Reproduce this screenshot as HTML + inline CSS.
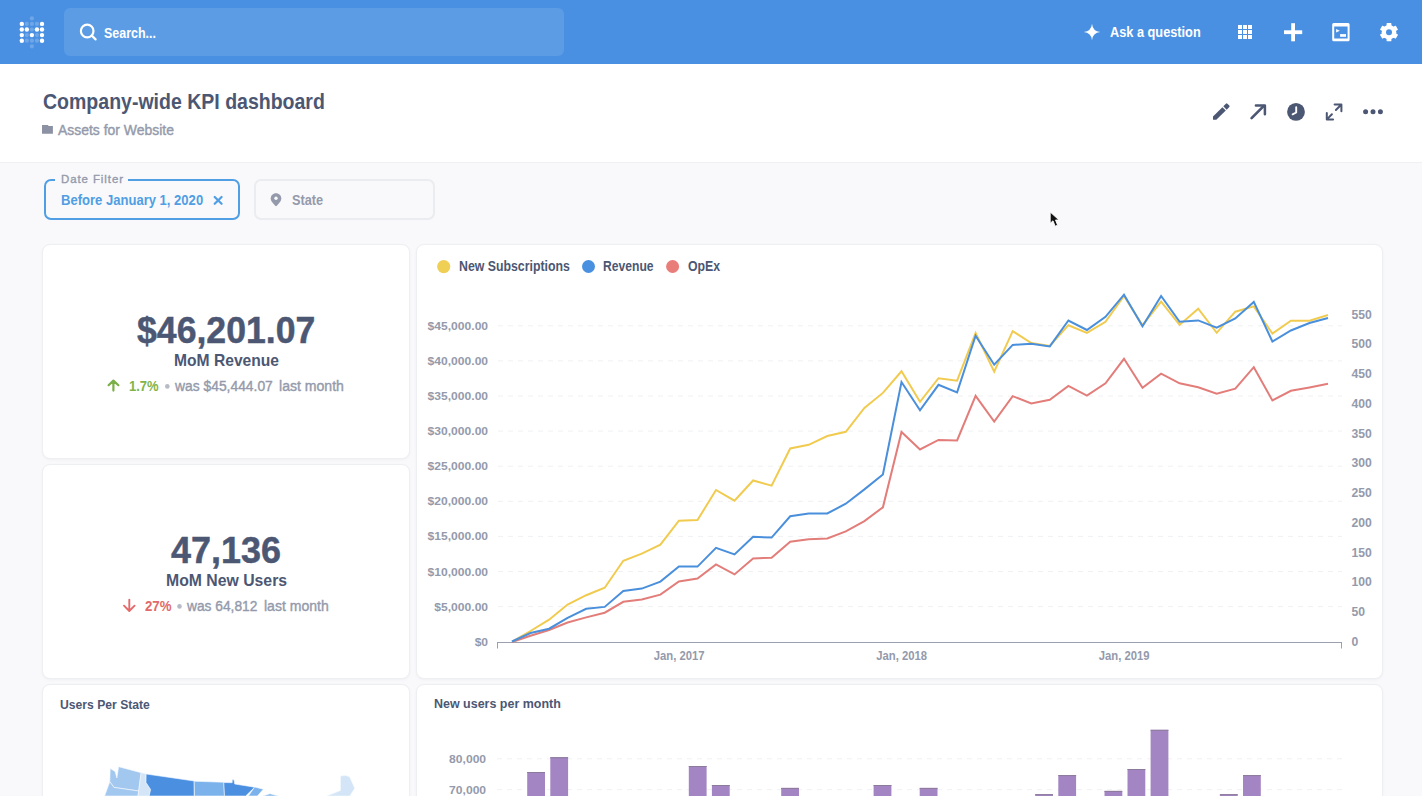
<!DOCTYPE html>
<html><head><meta charset="utf-8">
<style>
html,body{margin:0;padding:0;}
body{width:1422px;height:796px;overflow:hidden;position:relative;background:#F9F9FB;font-family:"Liberation Sans",sans-serif;}
.abs{position:absolute;}
.t{position:absolute;white-space:pre;line-height:1;transform-origin:0 0;font-family:"Liberation Sans",sans-serif;}
#nav{position:absolute;left:0;top:0;width:1422px;height:64px;background:#4A90E2;}
#search{position:absolute;left:64px;top:8px;width:500px;height:48px;border-radius:6px;background:#5B9CE5;}
#header{position:absolute;left:0;top:64px;width:1422px;height:98px;background:#FFFFFF;border-bottom:1px solid #EEF0F3;}
.card{position:absolute;background:#FFFFFF;border:1px solid #EDEFF2;border-radius:8px;box-shadow:0 1px 3px rgba(0,0,0,0.04);box-sizing:border-box;overflow:hidden;}
#df{position:absolute;left:44px;top:179px;width:196px;height:40.5px;box-sizing:border-box;border:2px solid #509EE3;border-radius:7px;}
#dflab{position:absolute;left:55px;top:176px;width:73px;height:6px;background:#F9F9FB;}
#st{position:absolute;left:254px;top:179px;width:181px;height:40.5px;box-sizing:border-box;border:2px solid #EBECEF;border-radius:7px;}
svg{position:absolute;left:0;top:0;overflow:visible;}
.grid{stroke:#F0F1F3;stroke-width:1;stroke-dasharray:5 5;}
.lab{font-family:"Liberation Sans",sans-serif;font-weight:700;fill:#949AAB;}
.bar{fill:#A385C3;}
.bartop{stroke:#8C7A9A;stroke-width:1;}
</style></head>
<body>
<div id="nav"><div id="search"></div></div>
<div id="header"></div>
<div id="df"></div><div id="dflab"></div>
<div id="st"></div>
<div class="card" style="left:41.5px;top:243.5px;width:368.7px;height:215px"></div>
<div class="card" style="left:41.5px;top:463.5px;width:368.7px;height:215px"></div>
<div class="card" style="left:416px;top:243.5px;width:967.2px;height:435px"></div>
<div class="card" style="left:41.5px;top:683.8px;width:368.7px;height:130px"></div>
<div class="card" style="left:416px;top:683.8px;width:967.2px;height:130px"></div>

<svg width="1422" height="796" viewBox="0 0 1422 796">
<!-- logo -->
<g fill="#FFFFFF">
 <g opacity="0.2">
  <circle cx="31.9" cy="18.3" r="2.1"/>
  <circle cx="26.85" cy="23.9" r="2.1"/><circle cx="31.9" cy="23.9" r="2.1"/><circle cx="36.95" cy="23.9" r="2.1"/>
  <circle cx="31.9" cy="29.5" r="2.1"/>
  <circle cx="26.85" cy="35.1" r="2.1"/><circle cx="36.95" cy="35.1" r="2.1"/>
  <circle cx="26.85" cy="40.7" r="2.1"/><circle cx="31.9" cy="40.7" r="2.1"/><circle cx="36.95" cy="40.7" r="2.1"/>
  <circle cx="31.9" cy="46.3" r="2.1"/>
 </g>
 <circle cx="21.8" cy="23.9" r="2.2"/><circle cx="42" cy="23.9" r="2.2"/>
 <circle cx="21.8" cy="29.5" r="2.2"/><circle cx="26.85" cy="29.5" r="2.2"/><circle cx="36.95" cy="29.5" r="2.2"/><circle cx="42" cy="29.5" r="2.2"/>
 <circle cx="21.8" cy="35.1" r="2.2"/><circle cx="31.9" cy="35.1" r="2.2"/><circle cx="42" cy="35.1" r="2.2"/>
 <circle cx="21.8" cy="40.7" r="2.2"/><circle cx="42" cy="40.7" r="2.2"/>
</g>
<!-- search icon -->
<circle cx="87.2" cy="31" r="6.3" fill="none" stroke="#FFFFFF" stroke-width="2.2"/>
<line x1="91.8" y1="35.6" x2="95.6" y2="39.4" stroke="#FFFFFF" stroke-width="2.2" stroke-linecap="round"/>
<!-- sparkle -->
<path d="M1092,23.8 Q1092.7,31.3 1100.2,32 Q1092.7,32.7 1092,40.2 Q1091.3,32.7 1083.8,32 Q1091.3,31.3 1092,23.8Z" fill="#FFFFFF"/>
<!-- grid -->
<g fill="#FFFFFF">
 <rect x="1238" y="25" width="4" height="4"/><rect x="1243" y="25" width="4" height="4"/><rect x="1248" y="25" width="4" height="4"/>
 <rect x="1238" y="30" width="4" height="4"/><rect x="1243" y="30" width="4" height="4"/><rect x="1248" y="30" width="4" height="4"/>
 <rect x="1238" y="35" width="4" height="4"/><rect x="1243" y="35" width="4" height="4"/><rect x="1248" y="35" width="4" height="4"/>
</g>
<!-- plus -->
<g fill="#FFFFFF"><rect x="1284" y="30.3" width="18.2" height="3.8"/><rect x="1291.2" y="23.2" width="3.8" height="18.1"/></g>
<!-- terminal -->
<path fill="#FFFFFF" fill-rule="evenodd" d="M1333.7,23.1 L1348.1,23.1 Q1349.6,23.1 1349.6,24.6 L1349.6,39.8 Q1349.6,41.3 1348.1,41.3 L1333.7,41.3 Q1332.2,41.3 1332.2,39.8 L1332.2,24.6 Q1332.2,23.1 1333.7,23.1Z M1334.2,26.4 L1334.2,38.5 L1347.6,38.5 L1347.6,26.4Z"/>
<path d="M1336.1,29 L1339.8,30.7 L1336.1,32.4Z" fill="#FFFFFF"/>
<rect x="1340.1" y="34.1" width="5.9" height="2.7" fill="#FFFFFF"/>
<!-- gear -->
<g transform="translate(1389,32.2)" fill="#FFFFFF">
 <circle r="7.3"/>
 <rect x="-2.4" y="-9.1" width="4.8" height="18.2" rx="0.6"/>
 <rect x="-2.4" y="-9.1" width="4.8" height="18.2" rx="0.6" transform="rotate(60)"/>
 <rect x="-2.4" y="-9.1" width="4.8" height="18.2" rx="0.6" transform="rotate(-60)"/>
</g>
<circle cx="1389" cy="32.2" r="3" fill="#4A90E2"/>

<!-- header icons -->
<g fill="#4C5773">
 <path d="M1213,119.8 L1213,116.6 L1222.4,107.2 L1225.8,110.6 L1216.3,119.8Z"/>
 <path d="M1223.3,106.3 L1225.9,103.7 Q1226.6,103 1227.4,103.7 L1229.3,105.6 Q1230,106.4 1229.3,107.1 L1226.7,109.7Z"/>
 <circle cx="1296" cy="111.9" r="8.9"/>
 <circle cx="1365.6" cy="111.8" r="2.5"/><circle cx="1373" cy="111.8" r="2.5"/><circle cx="1380.4" cy="111.8" r="2.5"/>
</g>
<g stroke="#4C5773" fill="none" stroke-linecap="round" stroke-linejoin="round">
 <path d="M1251.6,118.1 L1263.6,106.1" stroke-width="2.7"/>
 <path d="M1255.9,105.4 L1264.9,105.4 L1264.9,114.2" stroke-width="2.5"/>
 <path d="M1334.6,104.5 L1341.4,104.5 L1341.4,111.2 M1335.9,110 L1339.6,106.3" stroke-width="2"/>
 <path d="M1326.8,113 L1326.8,119.4 L1333.1,119.4 M1328.6,117.6 L1331.9,114.2" stroke-width="2"/>
</g>
<path d="M1296.2,107.2 L1296.2,112.5 L1292.6,114.3" stroke="#FFFFFF" stroke-width="1.9" fill="none" stroke-linecap="round" stroke-linejoin="round"/>
<!-- folder -->
<path d="M42,124.9 L47.8,124.9 L48.7,125.9 L52.9,125.9 L52.9,133.8 L42,133.8Z" fill="#8C92A4"/>
<!-- close x -->
<path d="M214.7,197 L221.6,203.8 M221.6,197 L214.7,203.8" stroke="#509EE3" stroke-width="2.2" stroke-linecap="round"/>
<!-- pin -->
<path d="M276,193.2 C279,193.2 281.3,195.5 281.3,198.4 C281.3,201.2 278,204.5 276,206.3 C274,204.5 270.7,201.2 270.7,198.4 C270.7,195.5 273,193.2 276,193.2Z" fill="#949AAB"/>
<circle cx="276" cy="198.3" r="1.7" fill="#FBFBFD"/>
<!-- metric arrows -->
<path d="M113.4,390.6 L113.4,381.2 M108.6,385.2 L113.4,380.6 L118.4,385.2" stroke="#7BAF47" stroke-width="2.2" fill="none" stroke-linecap="round" stroke-linejoin="round"/>
<circle cx="167.3" cy="386.4" r="2.3" fill="#B6BBC6"/>
<path d="M129.3,599.6 L129.3,610.8 M124,605.7 L129.3,611 L134.6,605.7" stroke="#E46A6A" stroke-width="1.9" fill="none" stroke-linecap="round" stroke-linejoin="round"/>
<circle cx="179.5" cy="606.4" r="2.3" fill="#B6BBC6"/>

<!-- line chart -->
<line x1="498" y1="325.8" x2="1342" y2="325.8" class="grid"/>
<line x1="498" y1="360.9" x2="1342" y2="360.9" class="grid"/>
<line x1="498" y1="396.0" x2="1342" y2="396.0" class="grid"/>
<line x1="498" y1="431.1" x2="1342" y2="431.1" class="grid"/>
<line x1="498" y1="466.2" x2="1342" y2="466.2" class="grid"/>
<line x1="498" y1="501.3" x2="1342" y2="501.3" class="grid"/>
<line x1="498" y1="536.4" x2="1342" y2="536.4" class="grid"/>
<line x1="498" y1="571.5" x2="1342" y2="571.5" class="grid"/>
<line x1="498" y1="606.6" x2="1342" y2="606.6" class="grid"/>
<line x1="497.5" y1="642.5" x2="1342" y2="642.5" stroke="#9AA0AF" stroke-width="1"/>
<line x1="497.5" y1="642" x2="497.5" y2="648.5" stroke="#9AA0AF" stroke-width="1"/>
<line x1="1341.5" y1="642" x2="1341.5" y2="648.5" stroke="#9AA0AF" stroke-width="1"/>
<text x="488.1" y="329.85" text-anchor="end" font-size="11.57" textLength="60.50" lengthAdjust="spacingAndGlyphs" class="lab">$45,000.00</text>
<text x="488.1" y="364.95" text-anchor="end" font-size="11.57" textLength="60.50" lengthAdjust="spacingAndGlyphs" class="lab">$40,000.00</text>
<text x="488.1" y="400.05" text-anchor="end" font-size="11.57" textLength="60.50" lengthAdjust="spacingAndGlyphs" class="lab">$35,000.00</text>
<text x="488.1" y="435.15" text-anchor="end" font-size="11.57" textLength="60.50" lengthAdjust="spacingAndGlyphs" class="lab">$30,000.00</text>
<text x="488.1" y="470.25" text-anchor="end" font-size="11.57" textLength="60.50" lengthAdjust="spacingAndGlyphs" class="lab">$25,000.00</text>
<text x="488.1" y="505.35" text-anchor="end" font-size="11.57" textLength="60.50" lengthAdjust="spacingAndGlyphs" class="lab">$20,000.00</text>
<text x="488.1" y="540.45" text-anchor="end" font-size="11.57" textLength="60.50" lengthAdjust="spacingAndGlyphs" class="lab">$15,000.00</text>
<text x="488.1" y="575.55" text-anchor="end" font-size="11.57" textLength="60.50" lengthAdjust="spacingAndGlyphs" class="lab">$10,000.00</text>
<text x="488.1" y="610.65" text-anchor="end" font-size="11.57" textLength="53.78" lengthAdjust="spacingAndGlyphs" class="lab">$5,000.00</text>
<text x="488.1" y="645.75" text-anchor="end" font-size="11.57" textLength="13.45" lengthAdjust="spacingAndGlyphs" class="lab">$0</text>
<text x="1351.6" y="318.60" font-size="12.00" textLength="20.30" lengthAdjust="spacingAndGlyphs" class="lab">550</text>
<text x="1351.6" y="348.35" font-size="12.00" textLength="20.30" lengthAdjust="spacingAndGlyphs" class="lab">500</text>
<text x="1351.6" y="378.10" font-size="12.00" textLength="20.30" lengthAdjust="spacingAndGlyphs" class="lab">450</text>
<text x="1351.6" y="407.85" font-size="12.00" textLength="20.30" lengthAdjust="spacingAndGlyphs" class="lab">400</text>
<text x="1351.6" y="437.60" font-size="12.00" textLength="20.30" lengthAdjust="spacingAndGlyphs" class="lab">350</text>
<text x="1351.6" y="467.35" font-size="12.00" textLength="20.30" lengthAdjust="spacingAndGlyphs" class="lab">300</text>
<text x="1351.6" y="497.10" font-size="12.00" textLength="20.30" lengthAdjust="spacingAndGlyphs" class="lab">250</text>
<text x="1351.6" y="526.85" font-size="12.00" textLength="20.30" lengthAdjust="spacingAndGlyphs" class="lab">200</text>
<text x="1351.6" y="556.60" font-size="12.00" textLength="20.30" lengthAdjust="spacingAndGlyphs" class="lab">150</text>
<text x="1351.6" y="586.35" font-size="12.00" textLength="20.30" lengthAdjust="spacingAndGlyphs" class="lab">100</text>
<text x="1351.6" y="616.10" font-size="12.00" textLength="13.53" lengthAdjust="spacingAndGlyphs" class="lab">50</text>
<text x="1351.6" y="645.85" font-size="12.00" textLength="6.77" lengthAdjust="spacingAndGlyphs" class="lab">0</text>
<text x="679.2" y="660" text-anchor="middle" font-size="12.86" textLength="50.80" lengthAdjust="spacingAndGlyphs" class="lab">Jan, 2017</text>
<text x="901.7" y="660" text-anchor="middle" font-size="12.86" textLength="50.80" lengthAdjust="spacingAndGlyphs" class="lab">Jan, 2018</text>
<text x="1124.2" y="660" text-anchor="middle" font-size="12.86" textLength="50.80" lengthAdjust="spacingAndGlyphs" class="lab">Jan, 2019</text>
<polyline points="512.0,642.0 530.5,635.7 549.1,630.0 567.6,622.5 586.2,617.4 604.7,612.7 623.3,601.8 641.8,599.5 660.4,594.6 678.9,581.4 697.5,578.5 716.0,564.4 734.5,574.4 753.1,558.4 771.6,557.8 790.2,541.8 808.7,539.3 827.3,538.4 845.8,531.4 864.4,521.1 882.9,507.3 901.5,432.0 920.0,449.5 938.5,439.9 957.1,440.4 975.6,395.8 994.2,421.6 1012.7,396.1 1031.3,403.5 1049.8,399.7 1068.4,385.9 1086.9,395.6 1105.5,383.3 1124.0,358.8 1142.5,387.8 1161.1,373.7 1179.6,383.3 1198.2,387.2 1216.7,393.7 1235.3,388.6 1253.8,367.2 1272.4,400.5 1290.9,390.8 1309.5,387.4 1328.0,383.8" fill="none" stroke="#E27D7A" stroke-width="2" stroke-linejoin="miter"/>
<polyline points="512.0,641.5 530.5,631.0 549.1,619.7 567.6,604.5 586.2,595.2 604.7,587.7 623.3,560.7 641.8,553.7 660.4,544.7 678.9,520.7 697.5,520.1 716.0,490.0 734.5,500.7 753.1,480.5 771.6,485.6 790.2,448.5 808.7,444.8 827.3,436.0 845.8,431.8 864.4,408.0 882.9,392.9 901.5,371.3 920.0,401.8 938.5,378.2 957.1,380.7 975.6,333.0 994.2,371.6 1012.7,331.1 1031.3,343.0 1049.8,346.0 1068.4,325.2 1086.9,332.8 1105.5,321.8 1124.0,296.0 1142.5,325.2 1161.1,301.7 1179.6,324.9 1198.2,308.7 1216.7,332.8 1235.3,311.7 1253.8,306.4 1272.4,333.5 1290.9,320.7 1309.5,320.7 1328.0,315.0" fill="none" stroke="#F1CB4F" stroke-width="2" stroke-linejoin="miter"/>
<polyline points="512.0,641.5 530.5,633.0 549.1,628.7 567.6,617.8 586.2,608.8 604.7,606.9 623.3,590.9 641.8,588.6 660.4,581.6 678.9,566.5 697.5,566.6 716.0,547.8 734.5,554.4 753.1,536.7 771.6,537.6 790.2,516.3 808.7,513.5 827.3,513.5 845.8,503.7 864.4,489.4 882.9,474.5 901.5,382.0 920.0,410.3 938.5,384.8 957.1,392.4 975.6,335.8 994.2,364.7 1012.7,344.9 1031.3,343.7 1049.8,346.4 1068.4,320.5 1086.9,330.0 1105.5,316.8 1124.0,294.7 1142.5,326.2 1161.1,296.0 1179.6,321.8 1198.2,320.4 1216.7,327.7 1235.3,318.5 1253.8,301.9 1272.4,341.5 1290.9,330.5 1309.5,323.0 1328.0,318.0" fill="none" stroke="#4A8FDB" stroke-width="2" stroke-linejoin="miter"/>
<circle cx="443.7" cy="266.6" r="6.6" fill="#F0CF55"/>
<circle cx="588.5" cy="266.5" r="6.5" fill="#4A90E0"/>
<circle cx="672.6" cy="266.5" r="6.5" fill="#E97D7A"/>

<!-- map -->
<g stroke="#F4F8FD" stroke-width="0.6" stroke-linejoin="round">
 <path d="M110.2,768.4 L115.1,771.6 L116.9,778 L118.6,766.7 L141.1,772.7 L138.7,791 L114,787.4 L109.8,781.8Z" fill="#A3C8F0"/>
 <path d="M109.8,781.8 L114,787.4 L138.7,791 L138,796 L104.6,796Z" fill="#A3C8F0"/>
 <path d="M141.1,772.7 L146.1,773.7 L146,782.5 L150.6,789.5 L149.2,796 L138,796Z" fill="#D3E5F7"/>
 <path d="M146.1,774 L194.2,781 L194.2,796 L149.2,796 L150.6,789.5 L146,782.5Z" fill="#4B8FE1"/>
 <path d="M194.2,781.2 L223.8,782.3 L224.5,796 L194.5,796Z" fill="#7CB2EC"/>
 <path d="M223.8,782.5 L232.2,782.7 L232.2,779.8 L234,779.8 L234.7,784 L254.7,787.2 L245.6,796 L224.5,796Z" fill="#4B8FE1"/>
 <path d="M248.4,796 L254.6,787 L263.3,789.2 L257.4,796Z" fill="#7CB2EC"/>
 <path d="M263,796 L270,793.8 L278.4,796Z" fill="#7CB2EC"/>
 <path d="M340.5,776 L346,775.5 L349.7,777 L354.7,788.3 L349.7,796 L326.8,796 L340.5,790.6Z" fill="#D3E5F7"/>
</g>

<!-- bar chart -->
<line x1="497" y1="758.8" x2="1342" y2="758.8" class="grid"/><line x1="497" y1="789.7" x2="1342" y2="789.7" class="grid"/>
<text x="486.1" y="762.9" text-anchor="end" font-size="11.29" textLength="37.00" lengthAdjust="spacingAndGlyphs" class="lab">80,000</text><text x="486.1" y="793.6" text-anchor="end" font-size="11.29" textLength="37.00" lengthAdjust="spacingAndGlyphs" class="lab">70,000</text>
<rect x="527.2" y="772.0" width="17.8" height="28.0" class="bar"/><line x1="527.2" y1="772.5" x2="545.0" y2="772.5" class="bartop"/>
<rect x="550.3" y="757.2" width="17.8" height="42.8" class="bar"/><line x1="550.3" y1="757.7" x2="568.1" y2="757.7" class="bartop"/>
<rect x="688.8" y="766.0" width="17.8" height="34.0" class="bar"/><line x1="688.8" y1="766.5" x2="706.6" y2="766.5" class="bartop"/>
<rect x="711.9" y="785.0" width="17.8" height="15.0" class="bar"/><line x1="711.9" y1="785.5" x2="729.7" y2="785.5" class="bartop"/>
<rect x="781.2" y="787.9" width="17.8" height="12.1" class="bar"/><line x1="781.2" y1="788.4" x2="799.0" y2="788.4" class="bartop"/>
<rect x="873.6" y="785.0" width="17.8" height="15.0" class="bar"/><line x1="873.6" y1="785.5" x2="891.4" y2="785.5" class="bartop"/>
<rect x="919.7" y="787.9" width="17.8" height="12.1" class="bar"/><line x1="919.7" y1="788.4" x2="937.5" y2="788.4" class="bartop"/>
<rect x="1035.2" y="794.2" width="17.8" height="5.8" class="bar"/><line x1="1035.2" y1="794.7" x2="1053.0" y2="794.7" class="bartop"/>
<rect x="1058.3" y="775.1" width="17.8" height="24.9" class="bar"/><line x1="1058.3" y1="775.6" x2="1076.1" y2="775.6" class="bartop"/>
<rect x="1104.5" y="790.9" width="17.8" height="9.1" class="bar"/><line x1="1104.5" y1="791.4" x2="1122.2" y2="791.4" class="bartop"/>
<rect x="1127.5" y="769.0" width="17.8" height="31.0" class="bar"/><line x1="1127.5" y1="769.5" x2="1145.3" y2="769.5" class="bartop"/>
<rect x="1150.6" y="729.8" width="17.8" height="70.2" class="bar"/><line x1="1150.6" y1="730.3" x2="1168.4" y2="730.3" class="bartop"/>
<rect x="1219.9" y="794.2" width="17.8" height="5.8" class="bar"/><line x1="1219.9" y1="794.7" x2="1237.7" y2="794.7" class="bartop"/>
<rect x="1243.0" y="775.1" width="17.8" height="24.9" class="bar"/><line x1="1243.0" y1="775.6" x2="1260.8" y2="775.6" class="bartop"/>

<!-- cursor -->
<path d="M1050.2,212 L1050.2,223.3 L1053,220.8 L1055.1,226.2 L1057.6,225.2 L1055.5,220 L1059,220Z" fill="#111111" stroke="#FFFFFF" stroke-width="0.9" stroke-linejoin="round"/>
</svg>
<span class="t" style="left:104.3px;top:24.59px;font-size:15.07px;color:#FFFFFF;font-weight:700;transform:scaleX(0.8275);">Search...</span>
<span class="t" style="left:1109.6px;top:24.51px;font-size:14.93px;color:#FFFFFF;font-weight:700;transform:scaleX(0.8542);">Ask a question</span>
<span class="t" style="left:42.6px;top:90.61px;font-size:22.46px;color:#4C5773;font-weight:700;transform:scaleX(0.8690);">Company-wide KPI dashboard</span>
<span class="t" style="left:58.3px;top:123.13px;font-size:14.20px;color:#949AAB;font-weight:400;transform:scaleX(0.9819);-webkit-text-stroke:0.4px #949AAB">Assets for Website</span>
<span class="t" style="left:60.8px;top:173.51px;font-size:11.16px;color:#949AAB;font-weight:400;transform:scaleX(1.0253);letter-spacing:0.9px;-webkit-text-stroke:0.35px #949AAB">Date Filter</span>
<span class="t" style="left:60.8px;top:193.97px;font-size:13.91px;color:#509EE3;font-weight:700;transform:scaleX(0.9381);">Before January 1, 2020</span>
<span class="t" style="left:291.8px;top:193.97px;font-size:13.91px;color:#949AAB;font-weight:700;transform:scaleX(0.9171);">State</span>
<span class="t" style="left:137.1px;top:311.65px;font-size:37.83px;color:#4C5773;font-weight:700;transform:scaleX(0.9418);-webkit-text-stroke:0.5px #4C5773">$46,201.07</span>
<span class="t" style="left:173.7px;top:352.53px;font-size:16.67px;color:#4C5773;font-weight:700;transform:scaleX(0.9379);">MoM Revenue</span>
<span class="t" style="left:129.3px;top:378.07px;font-size:15.22px;color:#7FB44A;font-weight:700;transform:scaleX(0.8534);">1.7%</span>
<span class="t" style="left:175.0px;top:378.07px;font-size:15.22px;color:#949AAB;font-weight:400;transform:scaleX(0.9102);-webkit-text-stroke:0.4px #949AAB">was $45,444.07</span>
<span class="t" style="left:279.2px;top:378.07px;font-size:15.22px;color:#949AAB;font-weight:400;transform:scaleX(0.9245);-webkit-text-stroke:0.4px #949AAB">last month</span>
<span class="t" style="left:170.8px;top:532.63px;font-size:36.67px;color:#4C5773;font-weight:700;transform:scaleX(0.9808);-webkit-text-stroke:0.5px #4C5773">47,136</span>
<span class="t" style="left:165.7px;top:571.88px;font-size:16.38px;color:#4C5773;font-weight:700;transform:scaleX(0.9651);">MoM New Users</span>
<span class="t" style="left:144.6px;top:597.77px;font-size:15.22px;color:#E26A6A;font-weight:700;transform:scaleX(0.8700);">27%</span>
<span class="t" style="left:187.3px;top:597.77px;font-size:15.22px;color:#949AAB;font-weight:400;transform:scaleX(0.9045);-webkit-text-stroke:0.4px #949AAB">was 64,812</span>
<span class="t" style="left:263.9px;top:597.77px;font-size:15.22px;color:#949AAB;font-weight:400;transform:scaleX(0.9216);-webkit-text-stroke:0.4px #949AAB">last month</span>
<span class="t" style="left:59.7px;top:697.57px;font-size:13.33px;color:#4C5773;font-weight:700;transform:scaleX(0.9120);">Users Per State</span>
<span class="t" style="left:458.7px;top:258.96px;font-size:14.64px;color:#4C5773;font-weight:700;transform:scaleX(0.8417);">New Subscriptions</span>
<span class="t" style="left:603.4px;top:258.96px;font-size:14.64px;color:#4C5773;font-weight:700;transform:scaleX(0.8293);">Revenue</span>
<span class="t" style="left:687.8px;top:258.96px;font-size:14.64px;color:#4C5773;font-weight:700;transform:scaleX(0.8422);">OpEx</span>
<span class="t" style="left:433.6px;top:697.49px;font-size:13.19px;color:#4C5773;font-weight:700;transform:scaleX(0.9455);">New users per month</span>
</body></html>
